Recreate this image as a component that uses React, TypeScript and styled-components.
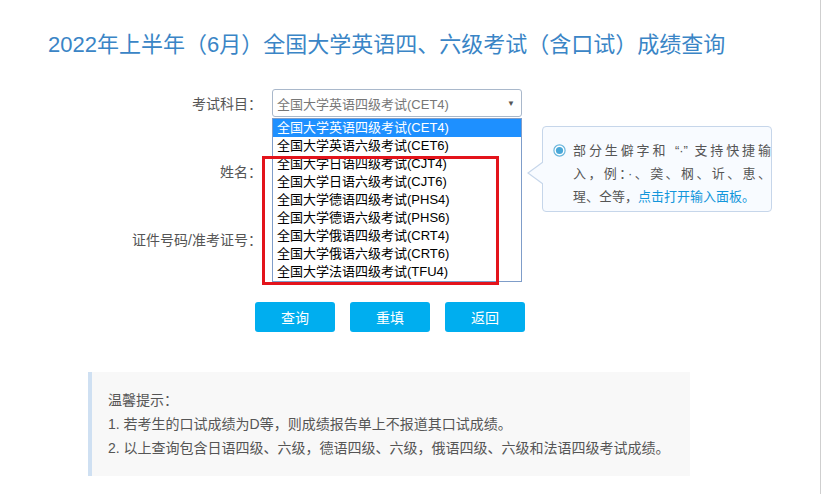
import React from 'react';
import styled, { createGlobalStyle } from 'styled-components';

const FONT = `"Liberation Sans", "Noto Sans CJK SC", sans-serif`;

const SUBJECTS = [
  '全国大学英语四级考试(CET4)',
  '全国大学英语六级考试(CET6)',
  '全国大学日语四级考试(CJT4)',
  '全国大学日语六级考试(CJT6)',
  '全国大学德语四级考试(PHS4)',
  '全国大学德语六级考试(PHS6)',
  '全国大学俄语四级考试(CRT4)',
  '全国大学俄语六级考试(CRT6)',
  '全国大学法语四级考试(TFU4)',
];

const GlobalStyle = createGlobalStyle`
  html, body {
    margin: 0;
    padding: 0;
    background: #fff;
    font-family: ${FONT};
  }
`;

const Page = styled.div`
  position: relative;
  width: 820px;
  height: 494px;
  border-right: 1px solid #cfcfcf;
  background: #fff;
  overflow: hidden;
`;

const Title = styled.h1`
  margin: 0;
  padding: 30px 0 0 48px;
  font-size: 22px;
  line-height: 30px;
  font-weight: normal;
  color: #3a85c6;
  white-space: nowrap;
`;

const Form = styled.div`
  display: flex;
  flex-direction: column;
  gap: 40px;
  margin-top: 29px;
`;

const Row = styled.div`
  display: flex;
  align-items: center;
  height: 28px;
`;

const Label = styled.label`
  width: 262px;
  text-align: right;
  font-size: 14px;
  color: #555;
  white-space: nowrap;
`;

const Control = styled.div`
  position: relative;
  width: 250px;
  height: 28px;
  margin-left: 10px;
`;

const Select = styled.div`
  box-sizing: border-box;
  display: flex;
  align-items: center;
  justify-content: space-between;
  width: 100%;
  height: 28px;
  padding: 0 6px 0 4px;
  border: 1px solid #a9b8cb;
  border-radius: 3px;
  font-size: 13px;
  color: #777;
`;

const Caret = styled.span`
  font-size: 8px;
  color: #555;
`;

const Input = styled.input`
  box-sizing: border-box;
  width: 100%;
  height: 28px;
  border: 1px solid #a9b8cb;
  border-radius: 3px;
`;

const Options = styled.ul`
  position: absolute;
  top: 29px;
  left: 0;
  z-index: 2;
  box-sizing: border-box;
  width: 250px;
  margin: 0;
  padding: 0;
  list-style: none;
  border: 1px solid #7f9dc9;
  background: #fff;
`;

const Option = styled.li<{ $active?: boolean }>`
  height: 18px;
  padding-left: 4px;
  font-size: 13px;
  line-height: 18px;
  white-space: nowrap;
  color: ${(p) => (p.$active ? '#fff' : '#000')};
  background: ${(p) => (p.$active ? '#1e90ff' : 'transparent')};
`;

const Marker = styled.div`
  position: absolute;
  left: -10px;
  top: 67px;
  z-index: 3;
  box-sizing: border-box;
  width: 237px;
  height: 129px;
  border: 3px solid #e3131b;
  pointer-events: none;
`;

const Tip = styled.div`
  position: absolute;
  left: 270px;
  top: -31px;
  box-sizing: border-box;
  display: flex;
  gap: 7px;
  width: 230px;
  height: 86px;
  padding: 12px 0 0 10px;
  border: 1px solid #c6d6ea;
  border-radius: 4px;
  background: #f8fbff;

  &::before,
  &::after {
    content: '';
    position: absolute;
    top: 35px;
    border-style: solid;
    border-color: transparent;
  }
  &::before {
    left: -16px;
    border-width: 11px 15px 11px 0;
    border-right-color: #c6d6ea;
  }
  &::after {
    left: -14px;
    border-width: 11px 15px 11px 0;
    border-right-color: #f8fbff;
  }
`;

const TipText = styled.div`
  width: 198px;
  font-size: 13px;
  line-height: 23px;
  color: #555;
`;

const TipLine = styled.span<{ $justify?: boolean }>`
  display: block;
  white-space: nowrap;
  text-align: justify;
  text-align-last: ${(p) => (p.$justify ? 'justify' : 'left')};
`;

const TipLink = styled.a`
  color: #1296db;
  text-decoration: none;
`;

const Buttons = styled.div`
  display: flex;
  gap: 15px;
  margin-top: 49px;
  padding-left: 255px;
`;

const Button = styled.button`
  width: 80px;
  height: 30px;
  padding: 0;
  border: none;
  border-radius: 3px;
  background: #00aeef;
  color: #fff;
  font-family: ${FONT};
  font-size: 14px;
`;

const Notice = styled.div`
  box-sizing: border-box;
  width: 602px;
  margin: 40px 0 0 88px;
  padding: 16px;
  border-left: 4px solid #cfe0f2;
  background: #f8f8f8;
  font-size: 14px;
  line-height: 24px;
  color: #555;
`;

const RadioIcon = () => (
  <svg width="13" height="13" viewBox="0 0 13 13" style={{ marginTop: 5, flex: 'none' }}>
    <circle cx="6.5" cy="6.5" r="5.6" fill="#fff" stroke="#6ab6dc" strokeWidth="1.2" />
    <circle cx="6.5" cy="6.5" r="3.6" fill="#4aa8d8" />
  </svg>
);

export default function App() {
  return (
    <>
      <GlobalStyle />
      <Page>
        <Title>2022年上半年（6月）全国大学英语四、六级考试（含口试）成绩查询</Title>
        <Form>
          <Row>
            <Label>考试科目：</Label>
            <Control>
              <Select>
                <span>{SUBJECTS[0]}</span>
                <Caret>▼</Caret>
              </Select>
              <Options>
                {SUBJECTS.map((s, i) => (
                  <Option key={s} $active={i === 0}>
                    {s}
                  </Option>
                ))}
              </Options>
              <Marker />
            </Control>
          </Row>
          <Row>
            <Label>姓名：</Label>
            <Control>
              <Input type="text" />
              <Tip>
                <RadioIcon />
                <TipText>
                  <TipLine $justify>部分生僻字和 “·” 支持快捷输</TipLine>
                  <TipLine $justify>入，例：·、䶮、㭎、䜣、恵、</TipLine>
                  <TipLine>
                    瑆、仝等，<TipLink href="#">点击打开输入面板。</TipLink>
                  </TipLine>
                </TipText>
              </Tip>
            </Control>
          </Row>
          <Row>
            <Label>证件号码/准考证号：</Label>
            <Control>
              <Input type="text" />
            </Control>
          </Row>
        </Form>
        <Buttons>
          <Button>查询</Button>
          <Button>重填</Button>
          <Button>返回</Button>
        </Buttons>
        <Notice>
          <div>温馨提示：</div>
          <div>1. 若考生的口试成绩为D等，则成绩报告单上不报道其口试成绩。</div>
          <div>2. 以上查询包含日语四级、六级，德语四级、六级，俄语四级、六级和法语四级考试成绩。</div>
        </Notice>
      </Page>
    </>
  );
}
